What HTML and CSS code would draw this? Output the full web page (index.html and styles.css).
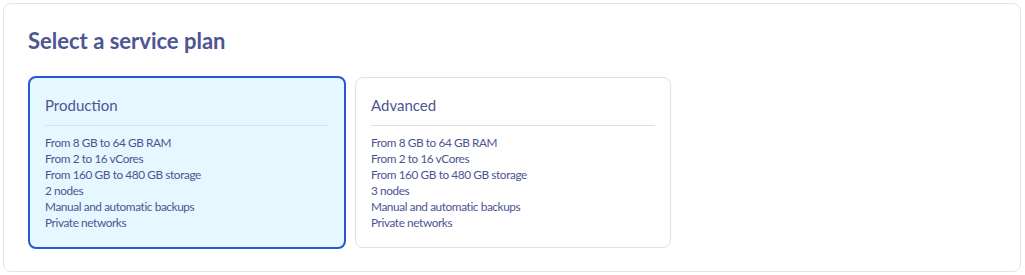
FILE: index.html
```html
<!DOCTYPE html>
<html lang="en">

<head>
    <meta charset="UTF-8">
    <meta name="viewport" content="width=device-width, initial-scale=1.0">
    <title>Service plan</title>
    <link rel="stylesheet" href="styles.css">
</head>

<body>
    <div class="panel">
        <h2 class="panel-title">Select a service plan</h2>

        <div class="plans">
            <div class="plan selected">
                <h3 class="plan-name">Production</h3>
                <ul class="plan-features">
                    <li>From 8 GB to 64 GB RAM</li>
                    <li>From 2 to 16 vCores</li>
                    <li>From 160 GB to 480 GB storage</li>
                    <li>2 nodes</li>
                    <li>Manual and automatic backups</li>
                    <li>Private networks</li>
                </ul>
            </div>

            <div class="plan">
                <h3 class="plan-name">Advanced</h3>
                <ul class="plan-features">
                    <li>From 8 GB to 64 GB RAM</li>
                    <li>From 2 to 16 vCores</li>
                    <li>From 160 GB to 480 GB storage</li>
                    <li>3 nodes</li>
                    <li>Manual and automatic backups</li>
                    <li>Private networks</li>
                </ul>
            </div>
        </div>
    </div>
</body>

</html>
```

FILE: styles.css
```css
body {
    margin: 3px;
    background-color: #fff;
    font-family: Lato, "Noto Sans", sans-serif;
    color: #4d5592;
}

.panel {
    border: 1px solid #e3e3e3;
    border-radius: 8px;
    padding: 23px 24px 24px;
    height: 269px;
    box-sizing: border-box;
    width: 1018px;
}

.panel-title {
    margin: 0 0 21px;
    font-size: 22px;
    line-height: 28px;
    font-weight: 700;
}

.plans {
    display: flex;
    align-items: flex-start;
    gap: 8px;
}

/* unselected card sits 1px inside, so both cards line up */
.plan {
    box-sizing: border-box;
    width: 316px;
    margin: 1px;
    border: 1px solid #e0e0e0;
    border-radius: 8px;
    padding: 15px 15px 16px;
    background-color: #fff;
}

.plan.selected {
    width: 318px;
    margin: 0;
    border: 2px solid #2557d6;
    background-color: #e5f7ff;
}

.plan-name {
    margin: 0;
    padding: 2px 0 10px;
    font-size: 15px;
    line-height: 20px;
    font-weight: 400;
    border-bottom: 1px solid #e0e0e0;
}

.plan-features {
    list-style: none;
    margin: 0;
    padding: 9px 0 0;
    font-size: 11.8px;
    line-height: 16px;
    letter-spacing: -0.4px;
}
```
